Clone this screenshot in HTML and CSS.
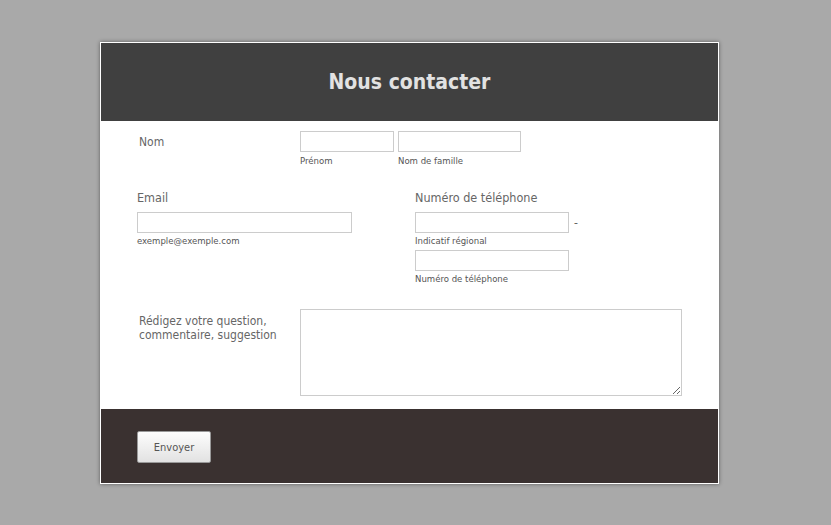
FILE: index.html
```html
<!DOCTYPE html>
<html lang="fr">
<head>
<meta charset="utf-8">
<title>Nous contacter</title>
<link rel="stylesheet" href="styles.css">
</head>
<body>
<div class="card">
  <header class="head"><h1 class="title">Nous contacter</h1></header>
  <form class="body">
    <div class="row row-name">
      <label class="lbl lbl-name">Nom</label>
      <div class="sub-group">
        <span class="field"><input class="inp w-first" type="text"><span class="sub sub-low">Prénom</span></span>
        <span class="field"><input class="inp w-last" type="text"><span class="sub sub-low">Nom de famille</span></span>
      </div>
    </div>
    <div class="row row-two">
      <div class="col col-email">
        <label class="lbl-top">Email</label>
        <input class="inp w-email" type="text">
        <span class="sub">exemple@exemple.com</span>
      </div>
      <div class="col col-phone">
        <label class="lbl-top">Numéro de téléphone</label>
        <div class="phone-line"><input class="inp w-phone" type="text"><span class="dash">-</span></div>
        <span class="sub">Indicatif régional</span>
        <input class="inp w-phone second" type="text">
        <span class="sub">Numéro de téléphone</span>
      </div>
    </div>
    <div class="row row-msg">
      <label class="lbl lbl-msg">Rédigez votre question, commentaire, suggestion</label>
      <textarea class="msg"></textarea>
    </div>
  </form>
  <footer class="foot"><button class="btn" type="button">Envoyer</button></footer>
</div>
</body>
</html>
```
FILE: styles.css
```css
html, body { margin: 0; padding: 0; }
body {
  background: #a9a9a9;
  font-family: "DejaVu Sans Condensed", "DejaVu Sans", sans-serif;
  color: #666;
  padding: 42px 0 0 100px;
  height: 525px;
  box-sizing: border-box;
}
.card {
  width: 617px;
  border: 1px solid #fff;
  background: #fff;
  box-shadow: 0 0 4px rgba(0,0,0,0.45);
}
.head {
  background: #404040;
  height: 78px;
  display: flex;
  align-items: center;
  justify-content: center;
}
.title {
  margin: 0;
  font-family: "DejaVu Sans Condensed", "DejaVu Sans", sans-serif;
  font-weight: bold;
  font-size: 21px;
  color: #e2e2e2;
}
.body {
  display: flex;
  flex-direction: column;
  padding: 10px 0 13px 0;
}
.row { display: flex; }
.lbl {
  font-size: 12px;
  line-height: 14px;
  color: #666;
}
.row-name { padding-left: 38px; }
.lbl-name { width: 161px; padding-top: 4px; }
.sub-group { display: flex; gap: 4px; }
.field { display: flex; flex-direction: column; }
.inp {
  box-sizing: border-box;
  height: 21px;
  border: 1px solid #ccc;
  margin: 0;
  padding: 2px 4px;
  background: #fff;
  font: inherit;
}
.w-first { width: 94px; }
.w-last { width: 123px; }
.w-email { width: 215px; }
.w-phone { width: 154px; }
.sub {
  font-size: 9.5px;
  line-height: 14px;
  color: #555;
  margin-top: 1px;
}
.sub-low { margin-top: 2px; }
.row-two { padding-left: 36px; margin-top: 21px; }
.col { display: flex; flex-direction: column; }
.col-email { width: 278px; }
.lbl-top {
  font-size: 12.5px;
  line-height: 18px;
  margin-bottom: 5px;
  color: #666;
}
.phone-line { display: flex; align-items: center; }
.dash { margin-left: 5px; font-size: 12px; color: #666; }
.second { margin-top: 2px; }
.row-msg { padding-left: 38px; margin-top: 23px; }
.lbl-msg { width: 140px; margin-right: 21px; padding-top: 5px; }
.msg {
  box-sizing: border-box;
  width: 382px;
  height: 87px;
  border: 1px solid #ccc;
  margin: 0;
  resize: both;
}
.foot {
  background: #3a3130;
  height: 74px;
  padding: 22px 0 0 36px;
  box-sizing: border-box;
}
.btn {
  width: 74px;
  height: 32px;
  border: 1px solid #999;
  border-radius: 2px;
  background: linear-gradient(#fdfdfd, #e2e2e2);
  color: #555;
  font-family: "DejaVu Sans Condensed", "DejaVu Sans", sans-serif;
  font-size: 11px;
  padding: 0;
}
```
